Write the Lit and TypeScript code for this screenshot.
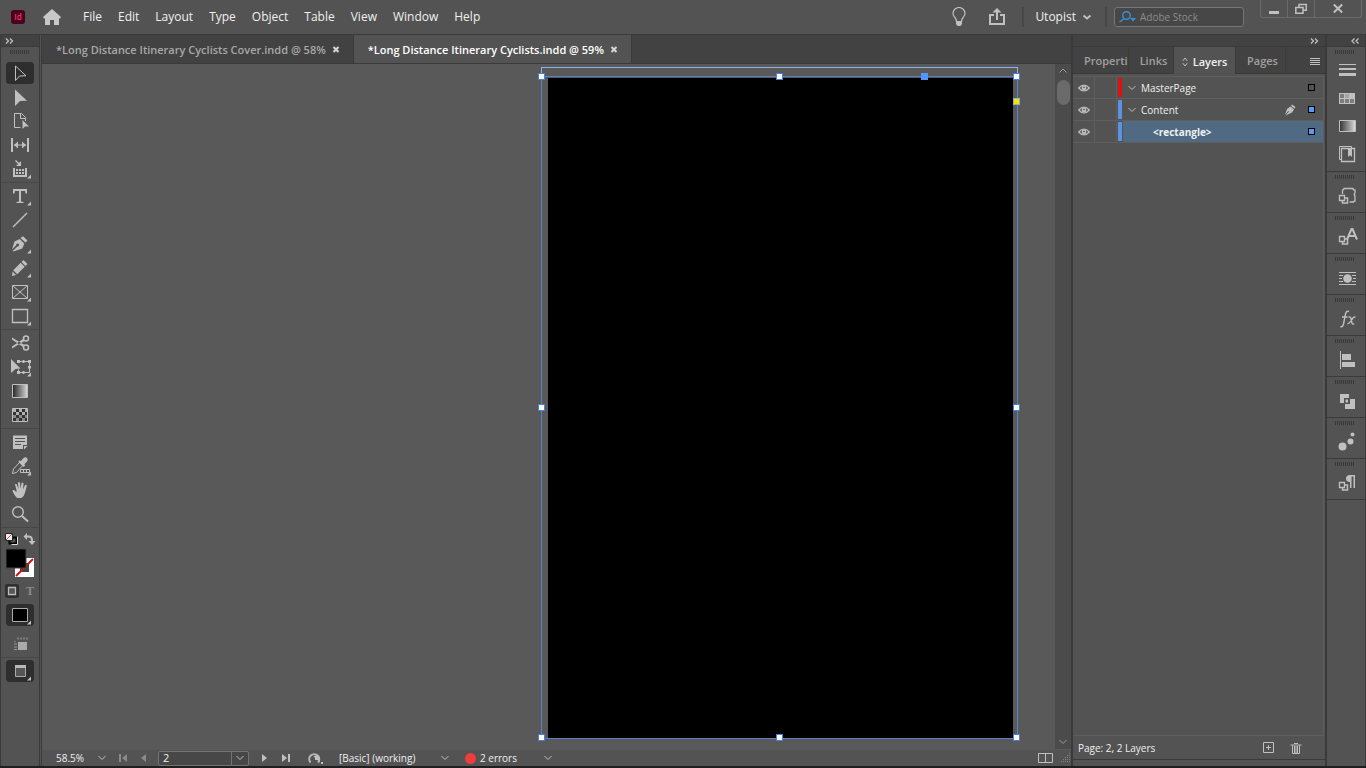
import { LitElement, html, svg, css, nothing, SVGTemplateResult } from "lit";
import { customElement, state } from "lit/decorators.js";
import { classMap } from "lit/directives/class-map.js";

type Glyph = SVGTemplateResult;

const icon = (w: number, h: number, g: Glyph) =>
  html`<svg class="icon" width=${w} height=${h} viewBox="0 0 ${w} ${h}" aria-hidden="true">${g}</svg>`;

const chevron = icon(10, 8, svg`<path class="s" d="M1.500 2 5 5.500 8.500 2"/>`);
const flyout = svg`<path class="f" d="M25 17.500v4h-4z"/>`;

/* Tool glyphs are drawn on a 28 x 24 grid. */
const tools: { name: string; g: Glyph; more?: boolean }[][] = [
  [
    { name: "Selection", g: svg`<path class="s" d="M9.500 5v14.500l4-4.500 6.500-.2z"/>` },
    { name: "Direct Selection", g: svg`<path class="f" d="M9 4.500v16.500l5-5 7-.3z"/>` },
    { name: "Page", g: svg`<path class="s" d="M14.500 18.500H8.500V4.500h7l4 4V12M14.500 5V9.500h4.500"/><path class="f" d="M16.500 11v9l2.500-2.500h4z"/>` },
    { name: "Gap", g: svg`<path class="s2" d="M6 5v14M22 5v14"/><path class="s" d="M8 12h12"/><path class="f" d="M8 12l4-3.500v7zM20 12l-4-3.500v7z"/>` },
    { name: "Content Collector", more: true, g: svg`<path class="s2" d="M8 11v8h12v-8"/><path class="s" style="stroke-width:1.500" d="M9.500 3.500l4 4"/><path class="f" d="M15 4v5H10zM10 12h2v2h-2zM13 12h2v2h-2zM16 12h2v2h-2zM10 15h2v2h-2zM13 15h2v2h-2zM16 15h2v2h-2z"/>` },
  ],
  [
    { name: "Type", more: true, g: svg`<path class="f" d="M7 5h14v4.500h-1.500L19 7h-4v10.500l2.500.5v1h-7v-1l2.500-.5V7H9l-.5 2.500H7z"/>` },
    { name: "Line", g: svg`<path class="s" style="stroke-width:1.500" d="M7 19 21 5"/>` },
    { name: "Pen", more: true, g: svg`<path class="f" d="M17 4.200 21.500 8.500l-2 2-5-4.500zM13.700 7l4.600 4.400-2 5.200-9 3-.6-.6 4.700-4.600a1.500 1.500 0 1 0-1.200-1.200L6 17.500l2.500-8z"/>` },
    { name: "Pencil", more: true, g: svg`<path class="f" d="M17.500 4 21.500 8l-2 2-4-4zM14.700 6.800l4 4-7.500 7.500-4-4zM6.500 15.500l3.500 3.500-4 1z"/>` },
    { name: "Rectangle Frame", more: true, g: svg`<path class="s" d="M6.500 5.500h15v13h-15zM6.500 5.500l15 13M21.500 5.500l-15 13"/>` },
    { name: "Rectangle", more: true, g: svg`<path class="s" style="stroke-width:1.300" d="M6.500 5.500h15v13h-15z"/>` },
  ],
  [
    { name: "Scissors", g: svg`<circle class="s" style="stroke-width:1.500" cx="20" cy="7.500" r="2.500"/><circle class="s" style="stroke-width:1.500" cx="20" cy="16.500" r="2.500"/><path class="f" d="M6 6.500 18.500 14 17 16 6 8.500zM6 17.500 18.500 10 17 8 6 15.500z"/>` },
    { name: "Free Transform", more: true, g: svg`<path class="f" d="M5 4v14l4.500-4 5-.5z"/><path class="s" d="M12.500 6.500h11v11h-11v-3"/><path class="f" d="M11 5h3v3h-3zM22 5h3v3h-3zM22 11h3v2.500h-3zM11 16h3v3h-3zM16.500 5h2v3h-2zM16.500 16h2v3h-2z"/>` },
    { name: "Gradient Swatch", g: svg`<defs><linearGradient id="gt"><stop stop-color="#262626"/><stop offset="1" stop-color="#d8d8d8"/></linearGradient></defs><path class="s" style="fill:url(#gt)" d="M6.500 5.500h15v13h-15z"/>` },
    { name: "Gradient Feather", g: svg`<path style="fill:#333" class="s" d="M6.500 5.500h15v13h-15z"/><path style="fill:#b0b0b0" d="M7 6h3v3H7zM13 6h3v3h-3zM19 6h2v3h-2zM10 9h3v3h-3zM16 9h3v3h-3z"/><path style="fill:#8a8a8a" d="M7 12h3v3H7zM13 12h3v3h-3zM19 12h2v3h-2zM10 15h3v3h-3zM16 15h3v3h-3z"/>` },
  ],
  [
    { name: "Note", g: svg`<path class="f" d="M7 5.500h14V15h-4v4H7z"/><path class="f" d="M18 16h3.500L18 19.500z"/><path d="M9 8.500h10M9 11.500h10M9 14.500h6" style="stroke:#535353;stroke-width:1.200"/>` },
    { name: "Eyedropper", more: true, g: svg`<path class="s" d="M14 8l-6.500 7-1 4.500 4-1L17 11"/><path class="f" d="M13 6.500 15 7l2.500-3q2-1.500 3.500 0t0 3.500L18.500 10l.5 2-1.500 1-5-5z"/><path class="s" d="M14.500 15.500h9v3h-9zM17.500 15.500v3M20.500 15.500v3"/>` },
    { name: "Hand", g: svg`<path class="f" d="M10.500 12 9 6.500q.8-1.400 1.800 0L12.500 11 12 4.700q1-1.500 2 0l.6 6 1-5.700q1.200-1.300 1.900.2L17 11.500l2-4.200q1.300-1 1.900.3l-2 7.400q-1 4-3.400 5h-4.300Q9 18.500 6.500 13q.3-1.700 2-.8l2 2z"/>` },
    { name: "Zoom", g: svg`<circle class="s" style="stroke-width:1.400" cx="12" cy="10" r="5.300"/><path class="s2" d="M16 14l6 5.500"/>` },
  ],
];

/* Collapsed panel icons are drawn on a 24 x 22 grid. */
const cascade = svg`<path class="s" style="stroke-width:1.300" d="M4.500 10.500h5v5h-5z"/><path class="s" style="stroke-width:1.500" d="M10 13h2.500v5H7.500v-3"/>`;
const docks: { name: string; g: Glyph }[][] = [
  [
    { name: "Stroke", g: svg`<path class="f" d="M4 4h17v1H4zM4 8h17v2H4zM4 13h17v3H4z"/>` },
    { name: "Swatches", g: svg`<path class="f" d="M4 5h16v11H4z"/><path style="fill:#7d7d7d" d="M5 6h4v4H5zM5 11h4v4H5zM10 11h4v4h-4zM15 11h4v4h-4z"/><path style="fill:#a5a5a5" d="M10 6h4v4h-4z"/>` },
    { name: "Gradient", g: svg`<defs><linearGradient id="gd"><stop stop-color="#333"/><stop offset="1" stop-color="#ddd"/></linearGradient></defs><path class="s" style="fill:url(#gd)" d="M4.500 4.500h16v11h-16z"/>` },
    { name: "CC Libraries", g: svg`<path class="s" d="M6.500 15.500h-2v-13h12v1.500"/><path class="s" style="stroke-width:1.300" d="M6.500 4.500h13v13h-13z"/><path class="f" d="M13 5h4v8l-2-1.800-2 1.800z"/>` },
  ],
  [{ name: "Object Styles", g: svg`<path class="s" style="stroke-width:1.300" d="M7.500 9V5q1.500 0 1.500-1.500h9q0 1.500 2 1.500v3q-1.500 1.500 0 3v5q-1.500 0-1.500 1h-4"/>${cascade}` }],
  [{ name: "Character Styles", g: svg`<path class="s" style="stroke-width:2" d="M12 13.500 16.500 3h1L22 13.500M13.500 10h7"/>${cascade}` }],
  [{ name: "Text Wrap", g: svg`<path class="f" d="M4 5h17v1H4zM4 8h4v1H4zM4 11h3v1H4zM4 14h4v1H4zM4 17h17v1H4zM17 8h4v1h-4zM18 11h3v1h-3zM17 14h4v1h-4z"/><circle class="f" cx="12.500" cy="11.500" r="4.300"/>` }],
  [{ name: "Effects", g: svg`<path class="s" style="stroke-width:1.400" d="M5.500 18.500q2 1 3-2.500l2-10q.8-3.500 3.500-2.500M7 9h5.500M13.500 9q2-.5 2.500 1.500l1 4.500q.5 1.500 2.300 1M20.500 9.200q-1.500-.8-3 1.300l-2 3q-1.500 2.500-3 2"/>` }],
  [{ name: "Align", g: svg`<path class="f" d="M5 2h1v18H5zM7 5h9v6H7zM7 13h13v5H7z"/>` }],
  [{ name: "Pathfinder", g: svg`<path class="f" d="M5 4h9v4H9v5H5zM15 9h5v10H10v-5h5z"/><path class="f" d="M10.500 9.500H13v3h-2.500z"/>` }],
  [{ name: "Color", g: svg`<circle class="f" cx="7.500" cy="15.500" r="4"/><circle class="f" cx="15.500" cy="10.500" r="3"/><circle class="f" cx="17.500" cy="3.500" r="2"/>` }],
  [{ name: "Paragraph Styles", g: svg`<path class="f" d="M20 3v13h-1.500V4.500h-2V16H15v-6q-4 0-4-3.500T15 3z"/>${cascade}` }],
];

const layers = [
  { name: "MasterPage", color: "red", open: true },
  { name: "Content", color: "blue", open: true, pen: true, filled: true },
  { name: "<rectangle>", color: "blue", child: true, filled: true },
];

@customElement("app-root")
export class AppRoot extends LitElement {
  @state() private tool = "Selection";
  @state() private layer = "<rectangle>";

  static styles = css`
    :host {
      --bar: #535353;
      --dark: #424242;
      --line: #3a3a3a;
      --ink: #f0f0f0;
      --blue: #5b9bf0;
      display: flex;
      flex-direction: column;
      height: 100vh;
      min-height: 700px;
      box-sizing: border-box;
      border-bottom: 2px solid #1f1f1f;
      background: var(--bar);
      color: var(--ink);
      font: 12px/16px "Open Sans", "Noto Sans", sans-serif;
      overflow: hidden;
    }
    * { box-sizing: border-box; }
    button, input, select { font: inherit; color: inherit; background: none; border: 0; padding: 0; margin: 0; min-width: 0; outline: 0; }
    button { display: flex; align-items: center; justify-content: center; }
    select { appearance: none; }
    .icon { display: block; flex: none; }
    .s { fill: none; stroke: #c0c0c0; stroke-width: 1; }
    .s2 { fill: none; stroke: #c0c0c0; stroke-width: 2; }
    .f { fill: #c0c0c0; }
    .grow { flex: 1; }

    .top { display: flex; align-items: center; height: 34px; flex: none; padding-left: 11px; }
    .top .home { margin-left: 18px; margin-right: 22px; }
    .menus { display: flex; gap: 16px; }
    .top .share { margin: 0 16px 0 22px; }
    .top .user { gap: 6px; margin: 0 13px 0 11px; }
    .rule { width: 2px; height: 20px; background: #474747; }
    .stock { display: flex; align-items: center; width: 130px; height: 20px; margin: 0 16px 0 7px; padding-left: 4px; gap: 4px; border: 1px solid #757575; border-radius: 3px; background: #474747; font-size: 10px; }
    .stock input { width: 90px; }
    .stock input::placeholder { color: #8c8c8c; opacity: 1; }
    .win { display: flex; align-self: flex-start; margin-right: 4px; border: 1px solid #6a6a6a; border-top: 0; border-radius: 0 0 3px 3px; }
    .win button { width: 27px; height: 17px; border-right: 1px solid #6a6a6a; }
    .win button:last-child { width: 46px; border: 0; }

    .body { display: flex; flex: 1; min-height: 0; border-top: 1px solid var(--line); }
    .strip { display: flex; align-items: center; height: 12px; flex: none; background: var(--dark); border-bottom: 1px solid var(--line); }
    .strip.end { justify-content: flex-end; padding-right: 6px; }
    .grip { width: 20px; height: 4px; background: repeating-linear-gradient(90deg, #383838 0 1px, transparent 1px 2px); }

    .tools { width: 42px; flex: none; border-left: 1px solid var(--line); border-right: 3px double var(--line); display: flex; flex-direction: column; }
    .tools .strip { padding-left: 4px; }
    .tools .grip { margin: 3px 0 7px 9px; }
    .group { display: flex; flex-direction: column; padding-left: 5px; }
    .group + .group, .sep { border-top: 1px solid #474747; margin-top: 1px; padding-top: 1px; }
    .tool { width: 28px; height: 24px; border-radius: 3px; }
    .on { background: #2e2e2e; background-clip: padding-box; border: solid transparent; border-width: 1px 0; border-radius: 4px; }
    .tool.on .icon { margin: -1px 0; }
    .mini { display: flex; height: 19px; padding-left: 4px; gap: 4px; align-items: center; }
    .mini.fmt { height: 20px; margin-bottom: 2px; }
    .mini button { width: 14px; height: 14px; }
    .swatches { padding: 0 0 3px 5px; }
    .modes { display: flex; flex-direction: column; padding-left: 5px; gap: 5px; }
    .sep { height: 2px; }
    .mini .sq { background: #303030; border-radius: 2px; }
    .mini .ty { font: bold 12px/14px "Liberation Serif", serif; color: #8a8a8a; }

    .work { flex: 1; min-width: 0; display: flex; flex-direction: column; background: #595959; }
    .tabs { display: flex; height: 29px; flex: none; background: var(--dark); border-bottom: 1px solid var(--line); font-weight: 600; font-size: 11px; }
    .tab { display: flex; align-items: center; gap: 6px; padding: 2px 13px 0 14px; border-right: 1px solid var(--line); color: #a8a8a8; }
    .tab.active { background: var(--bar); color: #fff; }
    .view { flex: 1; display: flex; min-height: 0; }
    .canvas { flex: 1; position: relative; overflow: hidden; }
    .board { position: absolute; top: 3px; right: 37px; bottom: 11px; width: 477px; border: 1px solid #8fb2e6; border-bottom: 0; }
    .frame { position: absolute; inset: 8px -1px 0 -1px; border: 1px solid #5584cc; }
    .page { position: absolute; inset: 1px 4px 0 6px; background: #000; }
    .h { position: absolute; width: 7px; height: 7px; margin: -4px; background: #fff; border: 1px solid #4a80d8; }
    .l { left: 0; } .c { left: 50%; } .r { left: 100%; }
    .t { top: 0; } .m { top: 50%; } .b { top: 100%; }
    .h.anchor { left: 383px; top: 0; background: #4f97ff; border-color: #4f97ff; }
    .h.corner { top: 25px; background: #f8e400; border-color: #8db3c0; }
    .scroll { width: 16px; flex: none; margin-bottom: 1px; background: #4b4b4b; display: flex; flex-direction: column; align-items: center; justify-content: space-between; padding: 3px 0 3px; }
    .thumb { width: 13px; height: 25px; margin-top: 5px; border-radius: 7px; background: #6a6a6a; }

    .status { display: flex; align-items: center; height: 16px; flex: none; background: var(--bar); font-size: 10px; padding-left: 14px; }
    .pick { display: grid; align-items: center; }
    .pick > * { grid-area: 1 / 1; }
    .pick .icon { justify-self: end; pointer-events: none; }
    .zoom { width: 51px; }
    .preset { width: 111px; }
    .errors { width: 73px; }
    .nav { display: flex; align-items: center; gap: 12px; margin: 0 10px 0 11px; }
    .nav.next { margin: 0 17px 0 12px; }
    .prefl { margin-right: 14px; }
    .pageno { display: flex; align-items: center; width: 91px; height: 15px; border: 1px solid #737373; border-radius: 2px; background: #474747; }
    .pageno input { flex: 1; padding-left: 4px; height: 13px; font-size: 11px; }
    .pageno button { width: 17px; height: 13px; border-left: 1px solid #737373; }
    .dot { width: 11px; height: 11px; margin: 0 4px 0 15px; border-radius: 50%; background: #f03c3c; }
    .corner-icons { display: flex; gap: 5px; }

    .panel { width: 256px; flex: none; display: flex; flex-direction: column; border: solid var(--line); border-width: 0 2px; }
    .ptabs { display: flex; height: 27px; flex: none; background: var(--dark); color: #a0a0a0; font-weight: 600; font-size: 11px; }
    .ptabs button { overflow: hidden; padding-top: 2px; border-right: 1px solid var(--line); border-bottom: 1px solid var(--line); white-space: nowrap; }
    .ptabs .p1 { width: 56px; padding-left: 11px; justify-content: flex-start; }
    .ptabs .p2 { width: 45px; padding-left: 5px; }
    .ptabs .p3 { width: 62px; gap: 5px; background: var(--bar); color: var(--ink); border-bottom: 0; }
    .ptabs .p4 { width: 50px; padding-left: 4px; }
    .ptabs .menu { flex: 1; border-right: 0; padding-left: 18px; }
    .list { flex: 1; margin: 2px 1px 0 0; border: 1px solid #5e5e5e; border-left: 0; font-size: 10px; }
    .row { display: flex; height: 22px; border-bottom: 1px solid #5e5e5e; }
    .eye, .lock { width: 22px; border-right: 1px solid #5e5e5e; }
    .bar { width: 4px; margin: 1px; background: #5b92e5; }
    .bar.red { background: #d81414; }
    .name { flex: 1; display: flex; align-items: center; gap: 4px; padding: 0 8px 0 4px; }
    .sel .name { background: #4f6a82; font-weight: 700; }
    .name .label { flex: 1; justify-content: flex-start; padding-top: 1px; }
    .child .name .label { padding-left: 26px; }
    .box { width: 7px; height: 7px; margin-left: 8px; border: 1px solid #000; }
    .box.filled { background: var(--blue); }
    .foot { display: flex; align-items: center; height: 24px; flex: none; padding: 0 23px 0 5px; gap: 15px; font-size: 10px; border-bottom: 1px solid var(--line); }
    .pad { height: 6px; }

    .dock { width: 39px; flex: none; border-right: 1px solid var(--line); }
    .dgroup { border-bottom: 1px solid var(--line); padding: 3px 0 5px 8px; display: flex; flex-direction: column; gap: 6px; }
    .dgroup button { width: 24px; height: 22px; }
  `;

  private renderTop() {
    return html`<header class="top">
      ${icon(14, 14, svg`<rect width="14" height="14" rx="3" fill="#49021f"/><text x="7" y="10" text-anchor="middle" font-family="Open Sans, sans-serif" font-weight="600" font-size="8" fill="#ff3366">Id</text>`)}
      <button class="home" aria-label="Home">${icon(18, 16, svg`<path d="M9 0 0 8l1 1.500h1V16h5v-5h4v5h5V9.500h1L18 8z" fill="#c8c8c8"/>`)}</button>
      <nav class="menus">
        ${["File", "Edit", "Layout", "Type", "Object", "Table", "View", "Window", "Help"].map((m) => html`<button>${m}</button>`)}
      </nav>
      <span class="grow"></span>
      <button aria-label="Learn">${icon(14, 20, svg`<path class="s" style="stroke-width:1.200" d="M4.500 14.500Q4.500 12 2.500 10 1 8 1 6.500a6 6 0 0 1 12 0Q13 8 11.500 10q-2 2-2 4.500z"/><path class="f" d="M4 14h6v3l-1.500 2h-3L4 17z"/>`)}</button>
      <button class="share" aria-label="Share">${icon(18, 18, svg`<path class="s2" d="M6 7H2v9h14V7h-4M9 12V3"/><path class="f" d="M9 0l4.500 4.500h-9z"/>`)}</button>
      <span class="rule"></span>
      <button class="user">Utopist ${icon(10, 8, svg`<path class="s2" d="M1.500 2.500 5 5.500 8.500 2.500"/>`)}</button>
      <span class="rule"></span>
      <label class="stock">
        ${icon(17, 12, svg`<circle cx="7.500" cy="4.500" r="3.800" fill="none" stroke="#3c8fd6" stroke-width="1.400"/><path d="M5 7.500.7 11" stroke="#3c8fd6" stroke-width="1.500"/><path d="M11 7h6l-3 3.500z" fill="#3c8fd6"/>`)}
        <input placeholder="Adobe Stock" aria-label="Search Adobe Stock" />
      </label>
      <div class="win">
        <button aria-label="Minimize">${icon(12, 14, svg`<path class="f" d="M1 9h10v3H1z"/>`)}</button>
        <button aria-label="Restore">${icon(12, 12, svg`<path class="s" style="stroke-width:1.500" d="M4 4V1.500h7.300v5.700H8M.8 4.500H8v5.700H.8z"/>`)}</button>
        <button aria-label="Close">${icon(10, 14, svg`<path class="s2" d="M.8 2.500l8.400 8M9.200 2.500l-8.400 8"/>`)}</button>
      </div>
    </header>`;
  }

  private renderTools() {
    return html`<aside class="tools">
      <div class="strip">${icon(10, 8, svg`<path class="s" style="stroke-width:1.300" d="M1 1.500 3.500 4 1 6.500M5 1.500 7.500 4 5 6.500"/>`)}</div>
      <div class="grip"></div>
      ${tools.map((g) => html`<div class="group">${g.map((t) => html`<button
        class=${classMap({ tool: true, on: t.name === this.tool })}
        aria-label=${t.name}
        @click=${() => (this.tool = t.name)}
      >${icon(28, 24, svg`${t.g}${t.more ? flyout : nothing}`)}</button>`)}</div>`)}
      <div class="sep"></div>
      <div class="mini">
        <button aria-label="Default colors">${icon(14, 14, svg`<path d="M4.500 5.500h7v6h-7z" fill="none" stroke="#000" stroke-width="2"/><path d="M6.500 12.500h6v-8" fill="none" stroke="#ddd"/><path d="M.5 1.500h7v7h-7z" fill="#eee" stroke="#222"/><path d="M1 8l6-6" stroke="#d55"/>`)}</button>
        <button aria-label="Swap fill and stroke">${icon(14, 14, svg`<path class="s2" d="M3 4.500h2.500q3.500 0 3.500 4V10"/><path class="f" d="M.5 4.500 4 1v7zM5.500 9h7L9 13z"/>`)}</button>
      </div>
      <button class="swatches" aria-label="Fill and stroke">${icon(28, 30, svg`<path d="M9 10h19v19H9z" fill="#fff"/><path d="M14 15h9v9h-9z" fill="#444"/><path d="M10 28 27 11" stroke="#d01414" stroke-width="2"/><path d="M0 1h20v19H0z" fill="#000" stroke="#444"/>`)}<span class="grow"></span></button>
      <div class="mini fmt">
        <button class="sq" aria-label="Formatting affects container">${icon(14, 14, svg`<path d="M3.500 3.500h7v7h-7z" fill="#555" stroke="#bbb" stroke-width="1.300"/>`)}</button>
        <button class="ty" aria-label="Formatting affects text">T</button>
      </div>
      <div class="modes">
        <button class="tool on" aria-label="Apply color">${icon(28, 24, svg`<path d="M6.500 5.500h15v13h-15z" fill="#000" stroke="#aaa"/>${flyout}`)}</button>
        <button class="tool" aria-label="View options">${icon(28, 24, svg`<path d="M12 10h9v8h-9z" fill="#aaa"/><path d="M9 9v1M8 12h3M8 15h3M8 17.500h3M12 5.500v2M15 5.500v2M18 5.500v2M21 5.500v2" stroke="#999" stroke-width="1.200"/>`)}</button>
      </div>
      <div class="sep"></div>
      <div class="modes">
        <button class="tool on" aria-label="Screen mode">${icon(28, 24, svg`<path d="M9.500 6.500h10v11h-10z" fill="#555" stroke="#aaa"/><path d="M9 6h11v3H9z" fill="#b8b8b8"/>${flyout}`)}</button>
      </div>
    </aside>`;
  }

  private renderWork() {
    const x = icon(8, 8, svg`<path d="M1.500 1l5 5M6.500 1l-5 5" stroke="#d8d8d8" stroke-width="2"/>`);
    return html`<main class="work">
      <div class="tabs">
        <div class="tab"><button>*Long Distance Itinerary Cyclists Cover.indd @ 58%</button><button aria-label="Close">${x}</button></div>
        <div class="tab active"><button>*Long Distance Itinerary Cyclists.indd @ 59%</button><button aria-label="Close">${x}</button></div>
      </div>
      <div class="view">
        <div class="canvas">
          <div class="board">
            <div class="frame">
              <div class="page"></div>
              ${["l t", "c t", "r t", "l m", "r m", "l b", "c b", "r b", "anchor", "r corner"].map((p) => html`<i class="h ${p}"></i>`)}
            </div>
          </div>
        </div>
        <div class="scroll">
          ${icon(10, 8, svg`<path class="s" style="stroke:#999" d="M1.500 5.500 5 2l3.500 3.500"/>`)}
          <div class="thumb"></div><span class="grow"></span>
          ${icon(10, 8, svg`<path class="s" style="stroke:#999" d="M1.500 2 5 5.500 8.500 2"/>`)}
        </div>
      </div>
      <footer class="status">
        <label class="pick zoom"><select aria-label="Zoom level"><option>58.5%</option></select>${chevron}</label>
        <div class="nav">
          <button aria-label="First page">${icon(10, 10, svg`<path d="M1 1h2v8H1zM9 1v8L4 5z" fill="#8a8a8a"/>`)}</button>
          <button aria-label="Previous page">${icon(8, 10, svg`<path d="M6 1v8L1 5z" fill="#8a8a8a"/>`)}</button>
        </div>
        <div class="pageno"><input value="2" aria-label="Page" /><button aria-label="Choose page">${chevron}</button></div>
        <div class="nav next">
          <button aria-label="Next page">${icon(8, 10, svg`<path class="f" d="M1 1v8l5-4z"/>`)}</button>
          <button aria-label="Last page">${icon(10, 10, svg`<path class="f" d="M1 1v8l5-4zM7 1h2v8H7z"/>`)}</button>
        </div>
        <button class="prefl" aria-label="Version status">${icon(17, 13, svg`<path d="M2.500 10.500A5 5 0 1 1 10 10.500" fill="none" stroke="#b8b8b8" stroke-width="2"/><path class="f" d="M5.500 4q4-1.500 6 2l.5 4.500L9.500 8H7V6zM13 10h2v2h-2z"/>`)}</button>
        <label class="pick preset"><select aria-label="Preflight profile"><option>[Basic] (working)</option></select>${chevron}</label>
        <span class="dot"></span>
        <label class="pick errors"><select aria-label="Preflight errors"><option>2 errors</option></select>${chevron}</label>
        <span class="grow"></span>
        <div class="corner-icons">
          <button aria-label="Split view">${icon(16, 12, svg`<path class="s" d="M.5 1.500h14v9H.5zM7.500 1.500v9"/>`)}</button>
          ${icon(12, 12, svg`<path d="M10 1h1v1h-1zM8 3h1v1H8zM10 3h1v1h-1zM6 5h1v1H6zM8 5h1v1H8zM10 5h1v1h-1zM4 7h1v1H4zM6 7h1v1H6zM8 7h1v1H8zM10 7h1v1h-1zM2 9h1v1H2zM4 9h1v1H4zM6 9h1v1H6zM8 9h1v1H8zM10 9h1v1h-1z" fill="#808080"/>`)}
        </div>
      </footer>
    </main>`;
  }

  private renderPanel() {
    return html`<section class="panel">
      <div class="strip end">${icon(10, 8, svg`<path class="s" style="stroke-width:1.300" d="M2 1.500 4.500 4 2 6.500M6 1.500 8.500 4 6 6.500"/>`)}</div>
      <div class="ptabs">
        <button class="p1" title="Properties">Properti</button>
        <button class="p2">Links</button>
        <button class="p3">${icon(6, 10, svg`<path class="s" d="M.8 3.800 3 1l2.200 2.800M.8 6.200 3 9l2.200-2.800"/>`)}Layers</button>
        <button class="p4">Pages</button>
        <button class="menu" aria-label="Panel menu">${icon(10, 9, svg`<path class="f" d="M0 1h10v1H0zM0 3h10v1H0zM0 5h10v1H0zM0 7h10v1H0z"/>`)}</button>
      </div>
      <div class="list">
        ${layers.map((l) => html`<div class=${classMap({ row: true, child: !!l.child, sel: l.name === this.layer })}>
          <button class="eye" aria-label="Toggle visibility">${icon(12, 10, svg`<path class="s" style="stroke-width:1.200" d="M.7 5Q6-1 11.300 5 6 11 .7 5z"/><circle class="f" cx="6" cy="5" r="2.400"/><circle cx="6" cy="4.500" r=".8" fill="#444"/>`)}</button>
          <button class="lock" aria-label="Toggle lock"></button>
          <span class="bar ${l.color}"></span>
          <div class="name">
            ${l.open ? html`<button aria-label="Collapse">${chevron}</button>` : nothing}
            <button class="label" @click=${() => (this.layer = l.name)}>${l.name}</button>
            ${l.pen ? icon(12, 12, svg`<path class="f" d="M8 .5 11.500 3 10.500 4.500 7 2zM6.300 2.500 10 5.300 8 8.500 1.500 11.500 5 7.500 4.300 7 1 11 3 5z"/>`) : nothing}
            <span class=${classMap({ box: true, filled: !!l.filled })}></span>
          </div>
        </div>`)}
      </div>
      <div class="foot">
        <span class="grow">Page: 2, 2 Layers</span>
        <button aria-label="New layer">${icon(12, 12, svg`<path class="s" d="M.5.5h10v10H.5zM3 5.500h5M5.500 3v5"/>`)}</button>
        <button aria-label="Delete layer">${icon(12, 12, svg`<path class="s" d="M4 1.500h4M.5 3h11M2.500 3.500v8h7v-8M4.500 4v7M6 4v7M7.500 4v7"/>`)}</button>
      </div>
      <div class="pad"></div>
    </section>`;
  }

  private renderDock() {
    return html`<aside class="dock">
      <div class="strip end">${icon(8, 8, svg`<path class="s" style="stroke-width:1.300" d="M3.500 1.500 1 4l2.500 2.500M7.500 1.500 5 4l2.500 2.500"/>`)}</div>
      ${docks.map((g) => html`<div class="dgroup"><div class="grip"></div>${g.map((d) => html`<button aria-label=${d.name}>${icon(24, 22, d.g)}</button>`)}</div>`)}
    </aside>`;
  }

  render() {
    return html`${this.renderTop()}
      <div class="body">${this.renderTools()}${this.renderWork()}${this.renderPanel()}${this.renderDock()}</div>`;
  }
}
